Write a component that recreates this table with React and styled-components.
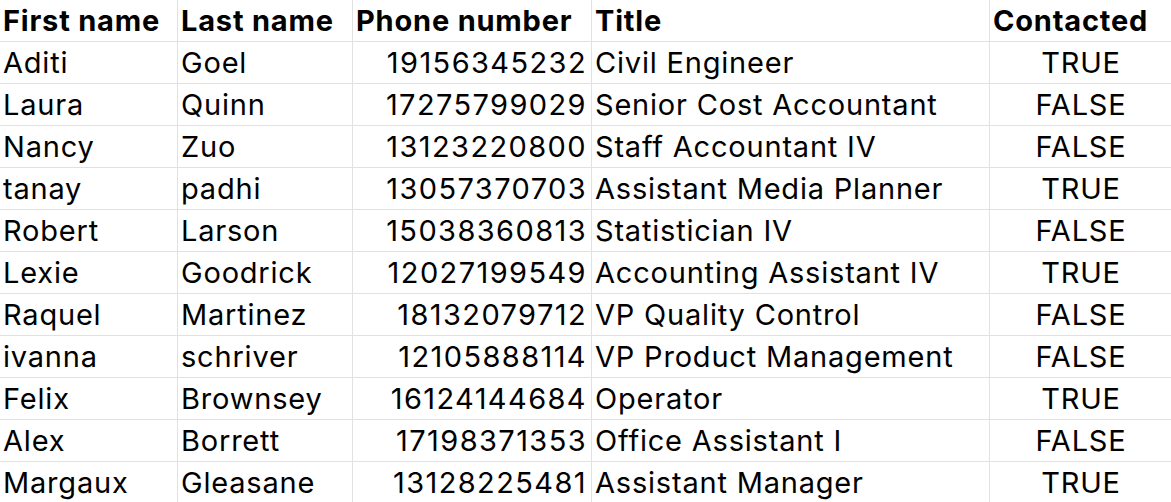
import React from "react";
import styled, { createGlobalStyle } from "styled-components";

const Global = createGlobalStyle`
  html, body { margin: 0; padding: 0; background: #ffffff; }
  body { font-family: Inter, "Noto Sans", sans-serif; color: #000; overflow: hidden; }
`;

const Sheet = styled.div`
  display: grid;
  grid-template-columns: 178px 175px 239px 398px 184px;
  grid-auto-rows: 42px;
  width: max-content;
`;

const Cell = styled.div`
  box-sizing: border-box;
  border-right: 1px solid #e1e1e1;
  border-bottom: 1px solid #e1e1e1;
  padding: 0 4px 0 3px;
  display: flex;
  align-items: center;
  justify-content: ${(p) =>
    p.$align === "right" ? "flex-end" : p.$align === "center" ? "center" : "flex-start"};
  font-size: 29px;
  letter-spacing: ${(p) => (p.$align === "right" ? "1.4px" : "0.8px")};
  font-weight: ${(p) => (p.$head ? 700 : 400)};
  line-height: 1;
  white-space: nowrap;
  overflow: hidden;
`;

const headers = ["First name", "Last name", "Phone number", "Title", "Contacted"];

const rows = [
  ["Aditi", "Goel", "19156345232", "Civil Engineer", "TRUE"],
  ["Laura", "Quinn", "17275799029", "Senior Cost Accountant", "FALSE"],
  ["Nancy", "Zuo", "13123220800", "Staff Accountant IV", "FALSE"],
  ["tanay", "padhi", "13057370703", "Assistant Media Planner", "TRUE"],
  ["Robert", "Larson", "15038360813", "Statistician IV", "FALSE"],
  ["Lexie", "Goodrick", "12027199549", "Accounting Assistant IV", "TRUE"],
  ["Raquel", "Martinez", "18132079712", "VP Quality Control", "FALSE"],
  ["ivanna", "schriver", "12105888114", "VP Product Management", "FALSE"],
  ["Felix", "Brownsey", "16124144684", "Operator", "TRUE"],
  ["Alex", "Borrett", "17198371353", "Office Assistant I", "FALSE"],
  ["Margaux", "Gleasane", "13128225481", "Assistant Manager", "TRUE"],
];

const aligns = ["left", "left", "right", "left", "center"];

export default function App() {
  return (
    <>
      <Global />
      <Sheet>
        {headers.map((h) => (
          <Cell key={h} $head>
            {h}
          </Cell>
        ))}
        {rows.map((r, i) =>
          r.map((v, j) => (
            <Cell key={i + "-" + j} $align={aligns[j]}>
              {v}
            </Cell>
          ))
        )}
      </Sheet>
    </>
  );
}
